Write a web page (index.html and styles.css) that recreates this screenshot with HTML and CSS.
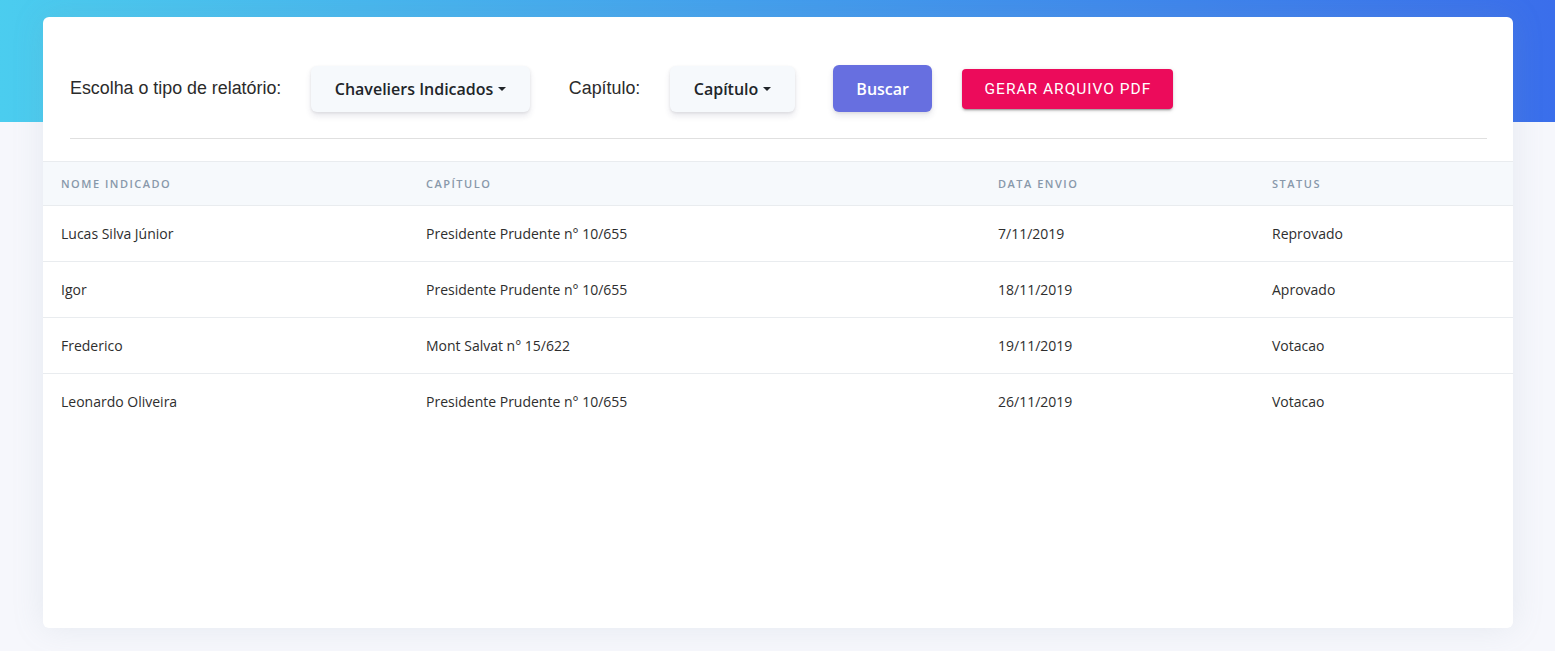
FILE: index.html
```html
<!DOCTYPE html>
<html lang="pt-BR">
<head>
<meta charset="utf-8">
<title>Relatórios</title>
<link rel="stylesheet" href="styles.css">
</head>
<body>
<main class="page">
  <section class="card">
    <div class="card-header">
      <div class="toolbar">
        <span class="label">Escolha o tipo de relatório:</span>
        <button class="btn btn-light btn-report dropdown-toggle">Chaveliers Indicados</button>
        <span class="label">Capítulo:</span>
        <button class="btn btn-light dropdown-toggle">Capítulo</button>
        <button class="btn btn-primary">Buscar</button>
        <button class="btn-pdf">Gerar arquivo PDF</button>
      </div>
      <hr class="divider">
    </div>
    <table class="table">
      <colgroup>
        <col class="c1"><col class="c2"><col class="c3"><col class="c4">
      </colgroup>
      <thead>
        <tr><th>Nome Indicado</th><th>Capítulo</th><th>Data Envio</th><th>Status</th></tr>
      </thead>
      <tbody>
        <tr><td>Lucas Silva Júnior</td><td>Presidente Prudente n° 10/655</td><td>7/11/2019</td><td>Reprovado</td></tr>
        <tr><td>Igor</td><td>Presidente Prudente n° 10/655</td><td>18/11/2019</td><td>Aprovado</td></tr>
        <tr><td>Frederico</td><td>Mont Salvat n° 15/622</td><td>19/11/2019</td><td>Votacao</td></tr>
        <tr><td>Leonardo Oliveira</td><td>Presidente Prudente n° 10/655</td><td>26/11/2019</td><td>Votacao</td></tr>
      </tbody>
    </table>
  </section>
</main>
</body>
</html>
```

FILE: styles.css
```css
html, body {
  margin: 0;
  padding: 0;
}
body {
  background-color: #f6f7fc;
  background-image: linear-gradient(87deg, #4bcdef 0%, #3a6eeb 100%);
  background-size: 100% 122px;
  background-repeat: no-repeat;
  font-family: "Open Sans", "Liberation Sans", sans-serif;
  height: 651px;
  overflow: hidden;
}
.page {
  padding: 17px 42px 0 43px;
}
.card {
  background: #fff;
  border-radius: 6px;
  height: 611px;
  box-shadow: 0 0 32px rgba(136, 152, 170, 0.15);
  overflow: hidden;
}
.card-header {
  padding: 48px 26px 0 27px;
}
.toolbar {
  display: flex;
  align-items: center;
  height: 47px;
}
.label {
  font-family: "Liberation Sans", Arial, sans-serif;
  font-size: 17.85px;
  color: #2b2b2b;
  margin-right: 30px;
}
.btn {
  border: 0;
  border-radius: 6px;
  height: 46px;
  padding: 0 23.5px;
  font-family: "Open Sans", sans-serif;
  font-size: 16px;
  font-weight: 600;
  cursor: pointer;
}
.btn-light {
  background: #f6f9fc;
  color: #212529;
  box-shadow: 0 4px 6px rgba(50, 50, 93, 0.11), 0 1px 3px rgba(0, 0, 0, 0.08);
}
.btn-report {
  margin-right: 39px;
}
.dropdown-toggle::after {
  content: "";
  display: inline-block;
  margin-left: 5px;
  vertical-align: 4px;
  border-top: 4px solid currentColor;
  border-left: 4px solid transparent;
  border-right: 4px solid transparent;
}
.btn-primary {
  margin-left: 38px;
  height: 47px;
  padding: 0 23.5px;
  background: #676fe0;
  color: #fff;
  box-shadow: 0 4px 6px rgba(50, 50, 93, 0.11), 0 1px 3px rgba(0, 0, 0, 0.08);
}
.btn-pdf {
  margin-left: 30px;
  height: 40px;
  width: 211px;
  padding: 0;
  border: 0;
  border-radius: 4px;
  background: #ec0b5b;
  color: #fff;
  font-family: Roboto, "Liberation Sans", sans-serif;
  font-size: 15.5px;
  font-weight: 400;
  letter-spacing: 1px;
  text-transform: uppercase;
  box-shadow: 0 3px 1px -2px rgba(0,0,0,0.2), 0 2px 2px 0 rgba(0,0,0,0.14), 0 1px 5px 0 rgba(0,0,0,0.12);
}
.divider {
  margin: 26px 0 0;
  border: 0;
  border-top: 1px solid #e0e0e0;
  height: 0;
}
.table {
  margin-top: 22px;
  width: 100%;
  border-collapse: collapse;
  table-layout: fixed;
}
.c1 { width: 365px; }
.c2 { width: 572px; }
.c3 { width: 274px; }
.table th {
  background: #f6f9fc;
  color: #8898aa;
  font-size: 11px;
  font-weight: 600;
  letter-spacing: 1.5px;
  text-transform: uppercase;
  text-align: left;
  line-height: 14px;
  padding: 15px 18px 14px;
  border-top: 1px solid #e9ecef;
  border-bottom: 1px solid #e9ecef;
}
.table td {
  font-size: 14px;
  color: #2e2e2e;
  line-height: 20px;
  padding: 18px 18px 17px;
  border-top: 1px solid #e9ecef;
}
.table tbody tr:first-child td {
  border-top: 0;
}
```
